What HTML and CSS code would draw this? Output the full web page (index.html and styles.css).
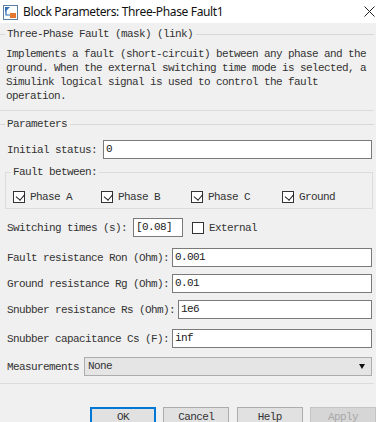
FILE: index.html
```html
<!DOCTYPE html>
<html lang="en">
<head>
  <meta charset="UTF-8" />
  <meta name="viewport" content="width=device-width, initial-scale=1" />
  <title>Block Parameters: Three-Phase Fault1</title>
  <link rel="stylesheet" href="styles.css">
</head>
<body>
  <div class="titlebar">
    <svg class="app-icon" width="15" height="15" viewBox="0 0 15 15">
      <rect x="0.5" y="0.5" width="14" height="14" fill="#ffffff" stroke="#5b7fa6" />
      <path d="M2 2 L7 2 L2 7 Z" fill="#2f6db5" />
      <path d="M3 4 L3 10 L8 10" fill="none" stroke="#2f6db5" stroke-width="1.2" />
      <rect x="7" y="8" width="6" height="5" fill="#e8772e" />
    </svg>
    <span class="title">Block Parameters: Three-Phase Fault1</span>
    <svg class="close" width="11" height="11" viewBox="0 0 11 11">
      <path d="M0.5 0.5 L10.5 10.5 M10.5 0.5 L0.5 10.5" stroke="#222" stroke-width="1" />
    </svg>
  </div>

  <!-- mask description -->
  <div class="group-head first">
    <span class="head-line short"></span>
    <span class="head-label">Three-Phase Fault (mask) (link)</span>
    <span class="head-line"></span>
  </div>
  <p class="desc">Implements a fault (short-circuit) between any phase and the<br>ground. When the external switching time mode is selected, a<br>Simulink logical signal is used to control the fault<br>operation.</p>
  <div class="rule"></div>

  <!-- parameters -->
  <div class="group-head">
    <span class="head-line short"></span>
    <span class="head-label">Parameters</span>
    <span class="head-line"></span>
  </div>

  <div class="row row-initial wide">
    <span class="label">Initial status:</span>
    <div class="field">0</div>
  </div>

  <fieldset class="fault">
    <legend>Fault between:</legend>
    <div class="checks">
      <div class="check"><span class="box on"></span>Phase A</div>
      <div class="check"><span class="box on"></span>Phase B</div>
      <div class="check"><span class="box on"></span>Phase C</div>
      <div class="check"><span class="box on"></span>Ground</div>
    </div>
  </fieldset>

  <div class="row row-switch wide">
    <span class="label">Switching times (s):</span>
    <div class="field short-field">[0.08]</div>
    <div class="check external"><span class="box"></span>External</div>
  </div>

  <div class="row row-ron">
    <span class="label">Fault resistance Ron (Ohm):</span>
    <div class="field">0.001</div>
  </div>

  <div class="row row-rg">
    <span class="label">Ground resistance Rg (Ohm):</span>
    <div class="field">0.01</div>
  </div>

  <div class="row row-rs">
    <span class="label">Snubber resistance Rs (Ohm):</span>
    <div class="field">1e6</div>
  </div>

  <div class="row row-cs">
    <span class="label">Snubber capacitance Cs (F):</span>
    <div class="field">inf</div>
  </div>

  <div class="row row-meas">
    <span class="label">Measurements</span>
    <div class="select">
      <span>None</span>
      <span class="arrow"></span>
    </div>
  </div>

  <div class="rule bottom"></div>

  <div class="buttons">
    <button class="btn default">OK</button>
    <button class="btn">Cancel</button>
    <button class="btn">Help</button>
    <button class="btn" disabled>Apply</button>
  </div>
</body>
</html>
```

FILE: styles.css
```css
body {
  margin: 0;
  width: 376px;
  height: 422px;
  overflow: hidden;
  background-color: #f0f0f0;
  color: #333333;
  font-family: "Liberation Mono", "DejaVu Sans Mono", monospace;
  font-size: 11px;
  letter-spacing: -0.6px;
  line-height: 14px;
}

.titlebar {
  height: 23px;
  background-color: #ffffff;
  display: flex;
  align-items: center;
  letter-spacing: 0;
}
.app-icon {
  margin-left: 3px;
  margin-top: 1px;
}
.title {
  margin-left: 5px;
  font-family: "Noto Sans", "Open Sans", sans-serif;
  font-size: 12px;
  letter-spacing: -0.35px;
  color: #111;
  flex: 1;
}
.close {
  margin-right: 1px;
}

.group-head {
  display: flex;
  align-items: center;
  height: 14px;
  margin-top: 6px;
  margin-right: 2px;
}
.group-head.first {
  margin-top: 4px;
}
.head-line {
  flex: 1;
  height: 1px;
  background-color: #d8d8d8;
}
.head-line.short {
  flex: 0 0 5px;
}
.head-label {
  padding: 0 3px 0 2px;
}

.desc {
  margin: 6px 0 7px 6px;
  white-space: nowrap;
}

.rule {
  height: 1px;
  background-color: #dcdcdc;
  margin-right: 2px;
}
.rule.bottom {
  margin-top: 7px;
}

.row {
  display: flex;
  align-items: center;
  gap: 3px;
  padding-left: 7px;
  padding-right: 4px;
  height: 19px;
}
.row.wide {
  gap: 6px;
}
.row-initial { margin-top: 9px; }
.row-switch { margin-top: 9px; }
.row-ron { margin-top: 11px; }
.row-rg { margin-top: 7px; }
.row-rs { margin-top: 7px; }
.row-cs { margin-top: 10px; }
.row-meas { margin-top: 9px; gap: 5px; }

.label {
  white-space: nowrap;
}

.field {
  flex: 1;
  height: 17px;
  line-height: 17px;
  background-color: #ffffff;
  border: 1px solid #7a7a7a;
  padding-left: 2px;
  color: #1a1a1a;
}
.field.short-field {
  flex: 0 0 46px;
}

.fault {
  margin: 6px 3px 0 5px;
  padding: 11px 7px 4px 7px;
  border: 1px solid #dcdcdc;
  min-width: 0;
}
.fault legend {
  padding: 0 2px;
  margin-left: -2px;
}
.checks {
  display: grid;
  grid-template-columns: 88px 90px 91px auto;
}
.check {
  display: flex;
  align-items: center;
  gap: 5px;
  white-space: nowrap;
}
.check.external {
  margin-left: 3px;
}
.box {
  width: 10px;
  height: 10px;
  border: 1px solid #333333;
  background-color: #ffffff;
  position: relative;
}
.box.on::after {
  content: "";
  position: absolute;
  left: 2px;
  top: 0px;
  width: 5px;
  height: 7px;
  border-right: 1.5px solid #222;
  border-bottom: 1.5px solid #222;
  transform: rotate(40deg) translate(1px, -1px);
}

.select {
  flex: 1;
  height: 17px;
  line-height: 17px;
  background-color: #e5e5e5;
  border: 1px solid #adadad;
  padding-left: 3px;
  display: flex;
  align-items: center;
  justify-content: space-between;
}
.arrow {
  width: 0;
  height: 0;
  border-left: 3.5px solid transparent;
  border-right: 3.5px solid transparent;
  border-top: 5px solid #111;
  margin-right: 6px;
}

.buttons {
  display: flex;
  align-items: flex-start;
  gap: 7.5px;
  padding-left: 90px;
  margin-top: 23px;
}
.btn {
  width: 67px;
  margin: 0;
  padding: 3px 0 5px;
  line-height: 12px;
  background-color: #e1e1e1;
  border: 1px solid #adadad;
  font-family: inherit;
  font-size: 11px;
  letter-spacing: -0.6px;
  color: #333333;
}
.btn.default {
  border: 2px solid #0078d7;
  padding: 2px 0 4px;
}
.btn:disabled {
  color: #a8a8a8;
  background-color: #d6d6d6;
  border-color: #c4c4c4;
}
```
